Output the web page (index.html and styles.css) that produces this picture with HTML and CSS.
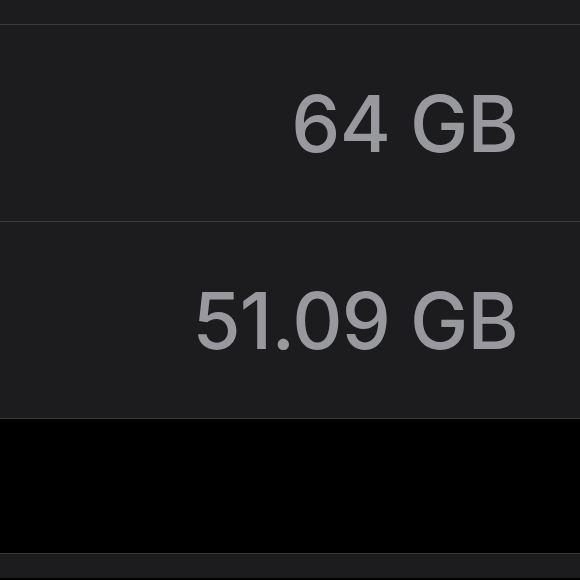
FILE: index.html
```html
<!DOCTYPE html>
<html lang="en">
<head>
    <meta charset="UTF-8">
    <meta name="viewport" content="width=device-width, initial-scale=1.0">
    <title>Storage</title>
    <link rel="stylesheet" href="styles.css">
</head>
<body>
    <div class="group">
        <div class="cell cell-partial"></div>
        <div class="cell">
            <span class="value">64 GB</span>
        </div>
        <div class="cell">
            <span class="value">51.09 GB</span>
        </div>
    </div>
    <div class="gap"></div>
    <div class="group group-next">
        <div class="cell cell-partial"></div>
    </div>
</body>
</html>
```
FILE: styles.css
```css
body {
    margin: 0;
    background-color: #000;
    font-family: Inter, "Liberation Sans", sans-serif;
}
.group {
    background-color: #1c1c1e;
}
.cell {
    height: 196px;
    border-bottom: 1px solid #3a3a3d;
    display: flex;
    align-items: center;
    justify-content: flex-end;
    padding-right: 62px;
}
.cell-partial {
    height: 24px;
}
.value {
    color: #98989f;
    font-size: 78px;
    font-weight: 500;
    letter-spacing: -0.8px;
}
.gap {
    height: 134px;
}
.group-next {
    border-top: 1px solid #3a3a3d;
}
.group-next .cell {
    border-bottom: none;
}
```
